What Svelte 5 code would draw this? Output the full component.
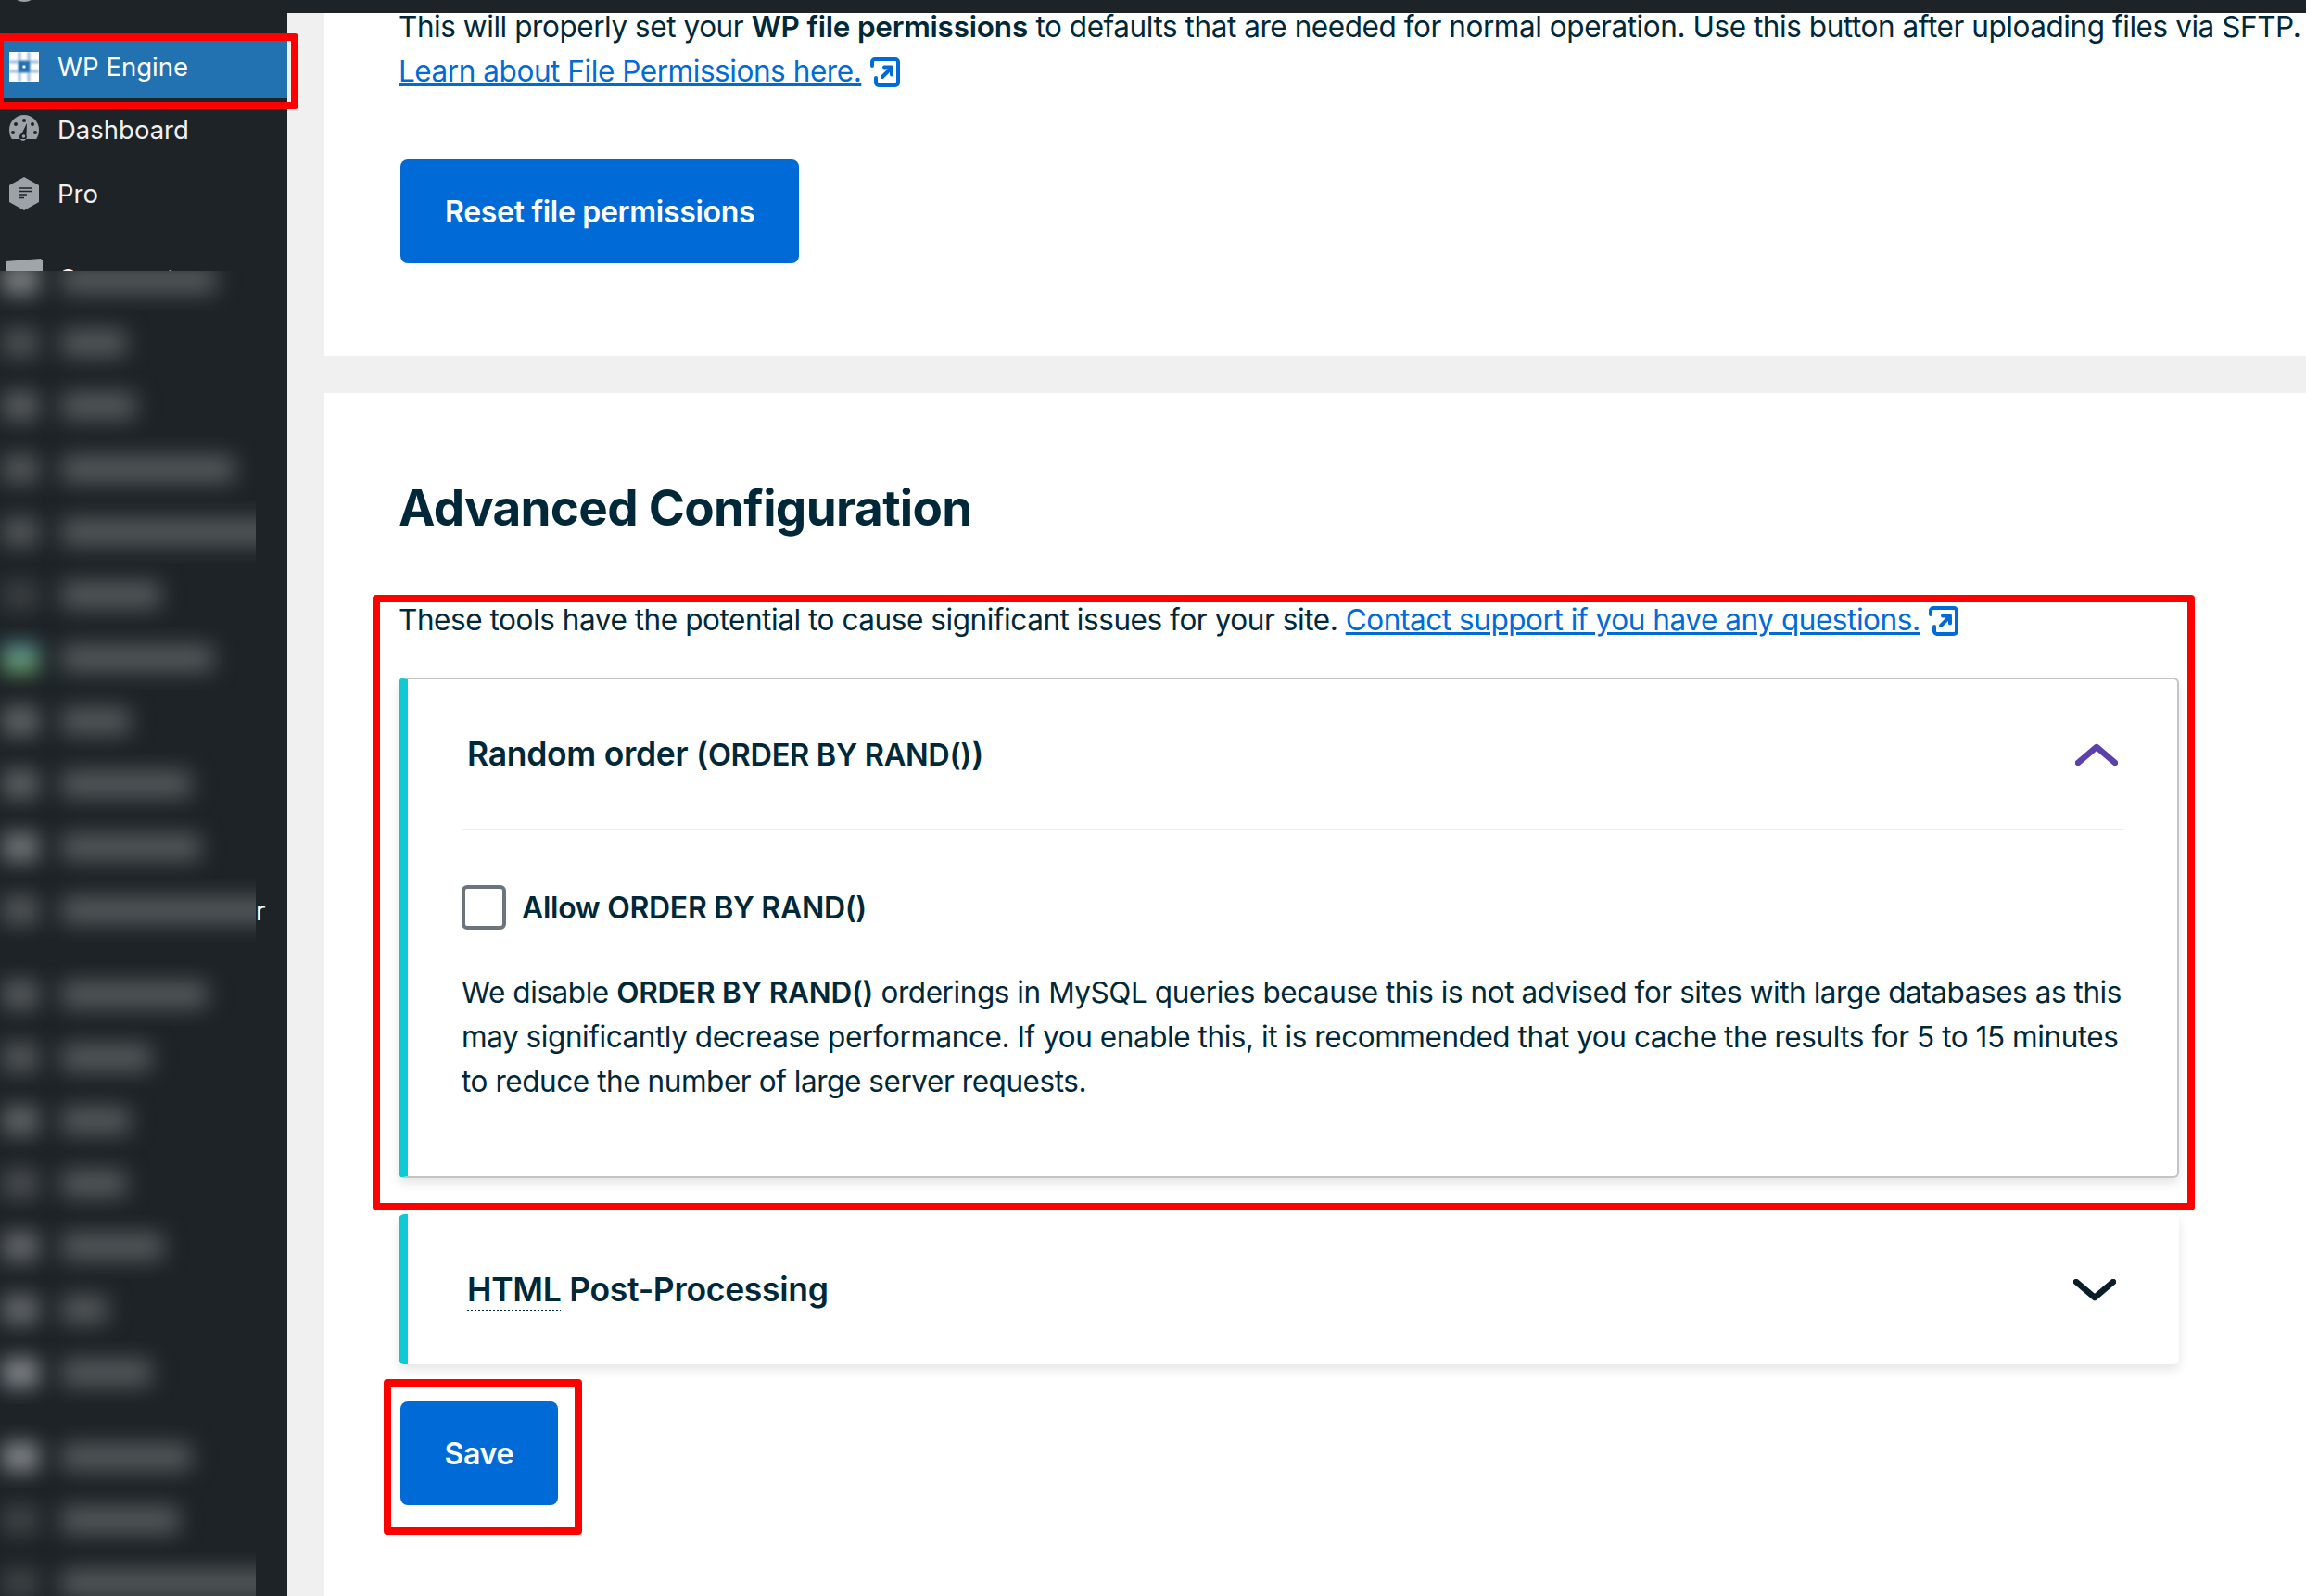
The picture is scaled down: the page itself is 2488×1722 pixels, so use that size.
<script>
  // blurred menu rows: end = right edge of the label, tone = icon colour
  const menuTop = [
    { end: 230, tone: '#7a7d80' },
    { end: 133, tone: '#4a4e51' },
    { end: 143, tone: '#565a5d' },
    { end: 250, tone: '#505457' },
    { end: 300, tone: '#505457' },
    { end: 170, tone: '#3a3e41' },
    { end: 227, tone: 'linear-gradient(#55899e, #6fa85f)' },
    { end: 137, tone: '#5e6265' },
    { end: 203, tone: '#5a5e61' },
    { end: 213, tone: '#6e7275' },
    { end: 300, tone: '#505457', tail: 'r' }
  ];
  const menuMid = [
    { end: 220, tone: '#54585b' },
    { end: 160, tone: '#505457' },
    { end: 137, tone: '#5e6265' },
    { end: 133, tone: '#484c4f' },
    { end: 173, tone: '#62666a' },
    { end: 113, tone: '#62666a' },
    { end: 160, tone: '#80848a' }
  ];
  const menuEnd = [
    { end: 203, tone: '#80848a' },
    { end: 190, tone: '#3e4245' },
    { end: 300, tone: '#3e4245' }
  ];
  const groups = [menuTop, menuMid, menuEnd];
</script>

{#snippet extLink()}
  <svg class="ext" viewBox="0 0 32 32" fill="none" stroke="#006bd6" stroke-width="4" stroke-linecap="round" stroke-linejoin="round">
    <path d="M2 9V5a3 3 0 0 1 3-3h22a3 3 0 0 1 3 3v22a3 3 0 0 1-3 3H9a3 3 0 0 1-3-3v-5" />
    <path d="M13 21 23 11M15 10.500h8v8" />
  </svg>
{/snippet}

<div class="page">
  <header class="topbar">
    <span class="wp-logo"></span>
  </header>

  <div class="shell">
    <nav class="sidebar">
      <a class="item current" href="#engine">
        <svg class="icon" viewBox="0 0 32 32">
          <rect width="32" height="32" fill="#fff" />
          <g class="soft" fill="#2271b1" opacity="0.45">
            <rect x="9.500" width="3" height="32" />
            <rect x="19.500" width="3" height="32" />
            <rect y="9.500" width="32" height="3" />
            <rect y="19.500" width="32" height="3" />
          </g>
          <rect class="soft" x="10" y="10" width="12" height="12" fill="#2271b1" />
          <rect x="14.500" y="14.500" width="3" height="3" fill="#fff" />
        </svg>
        <span>WP Engine</span>
      </a>
      <a class="item" href="#dashboard">
        <svg class="icon" viewBox="0 0 32 32">
          <path fill="#9ca2a7" fill-rule="evenodd" d="M16 0a16 16 0 0 1 16 16c0 4-1 7-2.800 10H2.800C1 23 0 20 0 16A16 16 0 0 1 16 0Zm0 4a2 2 0 1 0 0 4 2 2 0 0 0 0-4ZM7 8a2 2 0 1 0 0 4 2 2 0 0 0 0-4Zm18 0a2 2 0 1 0 0 4 2 2 0 0 0 0-4ZM4 17a2 2 0 1 0 0 4 2 2 0 0 0 0-4Zm24 0a2 2 0 1 0 0 4 2 2 0 0 0 0-4ZM19 9l-5.500 11a4 4 0 1 0 5 2Z" />
          <circle cx="15.500" cy="23" r="1.800" fill="#9ca2a7" />
        </svg>
        <span>Dashboard</span>
      </a>
      <a class="item pro" href="#pro">
        <svg class="icon tall" viewBox="0 0 32 36">
          <path fill="#9ca2a7" d="M16 0 32 9v18l-16 9-16-9V9Z" />
          <path stroke="#1d2327" stroke-width="1.700" d="M10 12h14M10 15.500h14M10 19h9M10 22.500h6" />
        </svg>
        <span>Pro</span>
      </a>
      <div class="item cut">
        <svg class="cut-icon" viewBox="0 0 40 13"><path fill="#a0a5aa" d="M0 3 38 0l2 2v11H0Z" /></svg>
        <span>Comments</span>
      </div>

      <div class="blurred">
        {#each groups as group}
          <div class="group">
            {#each group as row}
              <div class="row">
                <div class="clip">
                  <span class="blob" style="background: {row.tone}"></span>
                  <span class="bar" style="width: {row.end - 63}px"></span>
                </div>
                {#if row.tail}<span class="tail">{row.tail}</span>{/if}
              </div>
            {/each}
          </div>
        {/each}
      </div>
    </nav>

    <main class="content">
      <section class="panel first">
        <p class="copy top-copy">This will properly set your <strong>WP file permissions</strong> to defaults that are needed for normal operation. Use this button after uploading files via SFTP.<br /><a href="#perm">Learn about File Permissions here.</a> {@render extLink()}</p>
        <button class="btn">Reset file permissions</button>
      </section>

      <section class="panel second">
        <h2>Advanced Configuration</h2>
        <p class="copy intro">These tools have the potential to cause significant issues for your site. <a href="#support">Contact support if you have any questions.</a> {@render extLink()}</p>

        <div class="card open">
          <div class="card-head">
            <h3>Random order (<span class="small">ORDER BY RAND()</span>)</h3>
            <svg class="chev up" viewBox="0 0 46 24" fill="none" stroke="#5b41ad" stroke-width="6.500" stroke-linecap="round" stroke-linejoin="round"><path d="M3 21 23 4l20 17" /></svg>
          </div>
          <div class="card-body">
            <label class="check">
              <span class="box"></span>
              <span>Allow ORDER BY RAND()</span>
            </label>
            <p class="copy">We disable <strong>ORDER BY RAND()</strong> orderings in MySQL queries because this is not advised for sites with large databases as this may significantly decrease performance. If you enable this, it is recommended that you cache the results for 5 to 15 minutes to reduce the number of large server requests.</p>
          </div>
        </div>

        <div class="card closed">
          <div class="card-head">
            <h3><abbr>HTML</abbr> Post-Processing</h3>
            <svg class="chev down" viewBox="0 0 46 24" fill="none" stroke="#0a1e28" stroke-width="6.500" stroke-linecap="round" stroke-linejoin="round"><path d="M3 3l20 17L43 3" /></svg>
          </div>
        </div>

        <button class="btn save">Save</button>
      </section>
    </main>
  </div>

  <!-- red annotation boxes drawn over the screenshot -->
  <span class="mark mark-nav"></span>
  <span class="mark mark-tools"></span>
  <span class="mark mark-save"></span>
</div>

<style>
  :global(body) {
    margin: 0;
    background: #f0f0f0;
  }

  .page {
    position: relative;
    width: 2488px;
    height: 1722px;
    overflow: hidden;
    font-family: Inter, "Liberation Sans", sans-serif;
    color: #002838;
  }

  .topbar {
    position: relative;
    z-index: 2;
    height: 14px;
    background: #1d2327;
    overflow: hidden;
  }

  .wp-logo {
    position: absolute;
    left: 10px;
    top: -30px;
    width: 32px;
    height: 32px;
    border-radius: 50%;
    background: #9ca2a7;
  }

  .shell {
    display: flex;
    height: 1708px;
  }

  /* Sidebar */
  .sidebar {
    flex: 0 0 310px;
    background: #1d2327;
    padding-top: 24px;
    overflow: hidden;
    box-sizing: border-box;
  }

  .item {
    display: flex;
    align-items: center;
    gap: 20px;
    height: 68px;
    padding-left: 10px;
    font-size: 27.500px;
    color: #f0f0f1;
    text-decoration: none;
    box-sizing: border-box;
  }

  .item.current {
    background: linear-gradient(#1d2327 6px, #2271b1 6px);
    color: #fff;
  }

  .item.pro {
    padding-top: 2px;
  }

  .icon {
    flex: none;
    width: 32px;
    height: 32px;
  }

  .icon.tall {
    height: 36px;
  }

  .soft {
    filter: blur(1px);
  }

  .item.cut {
    height: 13px;
    margin-top: 37px;
    align-items: flex-start;
    overflow: hidden;
    padding-left: 6px;
    gap: 17px;
    line-height: 34px;
  }

  .cut-icon {
    flex: none;
    width: 40px;
    height: 13px;
  }

  .item.cut span {
    margin-top: 4px;
  }

  .blurred {
    height: 1430px;
    overflow: hidden;
  }

  .group {
    margin-top: 23px;
  }

  .group:first-child {
    margin-top: -24px;
  }

  .row {
    display: flex;
    align-items: center;
    height: 68px;
    color: #fff;
    font-size: 28px;
  }

  .clip {
    position: relative;
    flex: none;
    width: 276px;
    height: 68px;
    overflow: hidden;
  }

  .blob {
    position: absolute;
    left: 2px;
    top: 18px;
    width: 40px;
    height: 32px;
    filter: blur(11px);
  }

  .bar {
    position: absolute;
    left: 66px;
    top: 20px;
    height: 28px;
    background: #585c5f;
    filter: blur(12px);
  }

  .tail {
    margin-top: 2px;
  }

  /* Main column */
  .content {
    flex: 1;
    min-width: 0;
    padding-left: 40px;
    display: flex;
    flex-direction: column;
    gap: 40px;
  }

  .panel {
    background: #fff;
    padding-left: 80px;
  }

  .first {
    height: 370px;
    box-sizing: border-box;
  }

  .second {
    flex: 1;
    padding-top: 90px;
  }

  .copy {
    margin: 0;
    font-size: 31.500px;
    line-height: 48px;
    letter-spacing: -0.44px;
  }

  .copy strong {
    font-weight: 600;
    letter-spacing: -0.2px;
  }

  .copy a {
    color: #006bd6;
  }

  .top-copy {
    margin-top: -9px;
    white-space: nowrap;
  }

  .ext {
    width: 32px;
    height: 32px;
    vertical-align: -6px;
    margin-left: 1px;
  }

  .btn {
    display: block;
    height: 112px;
    margin: 71px 0 0 2px;
    padding: 0 48px;
    border: 0;
    border-radius: 8px;
    background: #006bd6;
    color: #fff;
    font: 600 32px Inter, "Liberation Sans", sans-serif;
    letter-spacing: -0.3px;
  }

  .btn.save {
    margin-top: 40px;
    padding: 0 47.500px;
  }

  h2 {
    margin: 0;
    font-size: 53px;
    line-height: 68px;
    font-weight: 700;
    letter-spacing: -0.7px;
  }

  .intro {
    margin-top: 63px;
    white-space: nowrap;
  }

  /* Accordion cards */
  .card {
    box-sizing: border-box;
    width: 1921px;
    margin-top: 38px;
    border-left: 10px solid #0ecad4;
    border-radius: 6px;
    background: #fff;
    box-shadow: 0 6px 12px rgba(0, 0, 0, 0.1);
  }

  .closed {
    margin-top: 39px;
  }

  .card.open {
    height: 540px;
    border-top: 2px solid #c4c4c4;
    border-right: 2px solid #c4c4c4;
    border-bottom: 2px solid #c4c4c4;
  }

  .card.closed {
    height: 162px;
  }

  .card-head {
    display: flex;
    align-items: center;
    justify-content: space-between;
    box-sizing: border-box;
    height: 162px;
    margin: 0 57px 0 58px;
  }

  .open .card-head {
    height: 163px;
    border-bottom: 2px solid #eee;
  }

  h3 {
    margin: 0 0 0 6px;
    font-size: 35.500px;
    font-weight: 600;
    letter-spacing: -0.3px;
  }

  .small {
    font-size: 32.500px;
  }

  abbr {
    text-decoration: underline dotted 2px;
    text-underline-offset: 10px;
  }

  .chev {
    flex: none;
    width: 46px;
    height: 24px;
  }

  .up {
    margin-right: 7px;
  }

  .down {
    margin-right: 11px;
    margin-top: 2px;
  }

  .card-body {
    padding: 59px 57px 0 58px;
  }

  .check {
    display: flex;
    align-items: center;
    gap: 17px;
    margin-bottom: 44px;
    font-size: 32px;
    font-weight: 600;
    letter-spacing: -0.3px;
  }

  .box {
    box-sizing: border-box;
    width: 48px;
    height: 48px;
    border: 4px solid #6c757d;
    border-radius: 6px;
  }

  /* Annotations */
  .mark {
    position: absolute;
    z-index: 3;
    box-sizing: border-box;
    border: 8px solid #f00;
    border-radius: 4px;
  }

  .mark-nav {
    left: -4px;
    top: 36px;
    width: 326px;
    height: 82px;
  }

  .mark-tools {
    left: 402px;
    top: 642px;
    width: 1966px;
    height: 664px;
  }

  .mark-save {
    left: 414px;
    top: 1488px;
    width: 214px;
    height: 168px;
  }
</style>
